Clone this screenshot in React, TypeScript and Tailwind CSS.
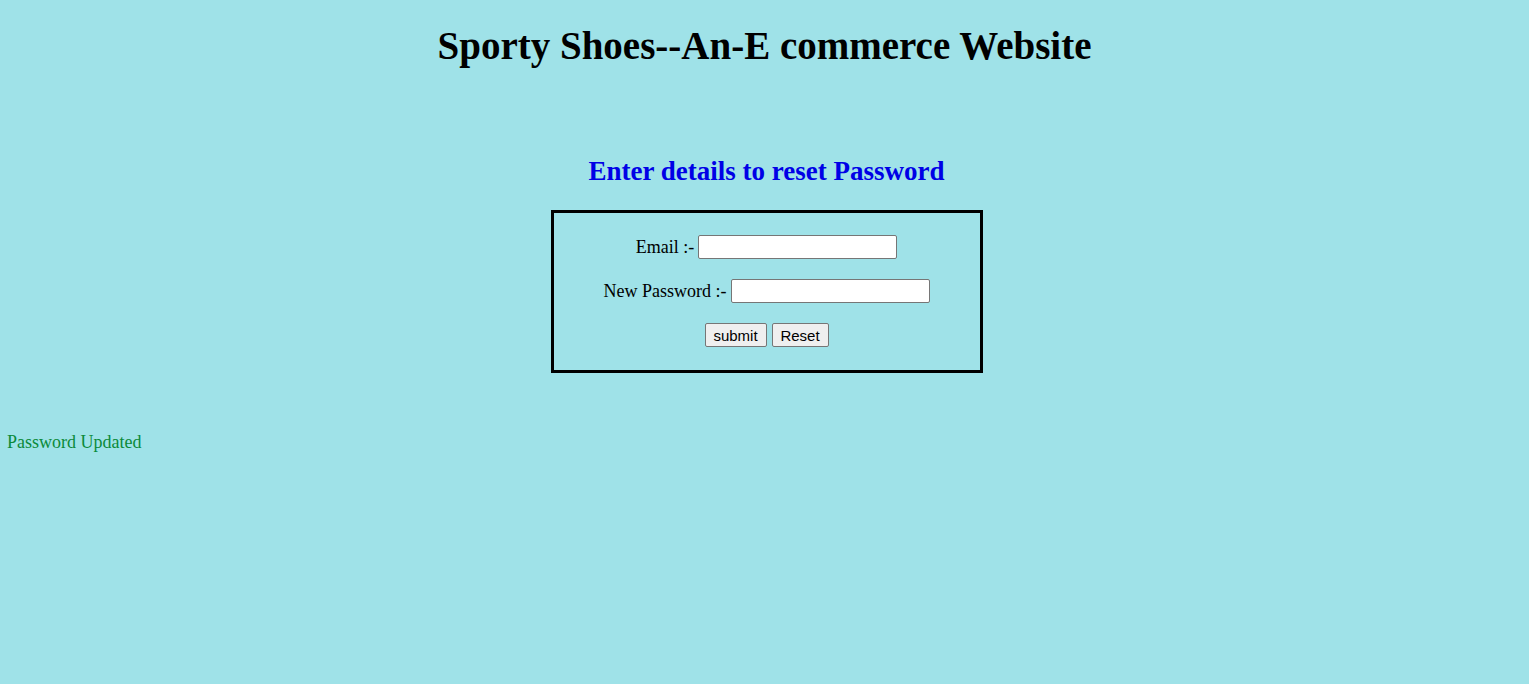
export default function App() {
  return (
    <div
      className="min-h-[684px] w-full bg-[#9fe2e8] text-black"
      style={{ fontFamily: '"Liberation Serif", "Times New Roman", serif' }}
    >
      {/* Header */}
      <h1 className="pt-[22px] text-center text-[39px] font-bold leading-[48px]">
        Sporty Shoes--An-E commerce Website
      </h1>

      {/* Reset form */}
      <h2 className="mt-[84px] pl-[4px] text-center text-[27px] font-bold leading-[34px] text-[#0000e6]">
        Enter details to reset Password
      </h2>

      <div className="mt-[22px] flex justify-center pl-[4px]">
        <form className="flex w-[432px] h-[163px] flex-col items-center border-[3px] border-black pt-[22px] text-[18px]">
          <div className="flex h-[24px] items-center gap-[4px]">
            <label>Email :-</label>
            <input
              type="text"
              className="h-[24px] w-[199px] rounded-[2px] border border-[#767676] bg-white px-1"
            />
          </div>
          <div className="mt-[20px] flex h-[24px] items-center gap-[4px]">
            <label>New Password :-</label>
            <input
              type="password"
              className="h-[24px] w-[199px] rounded-[2px] border border-[#767676] bg-white px-1"
            />
          </div>
          <div
            className="mt-[20px] flex gap-[5px] text-[15px]"
            style={{ fontFamily: '"Liberation Sans", Arial, sans-serif' }}
          >
            <button
              type="button"
              className="h-[24px] w-[62px] rounded-[2px] border border-[#767676] bg-[#efefef] leading-none"
            >
              submit
            </button>
            <button
              type="reset"
              className="h-[24px] w-[57px] rounded-[2px] border border-[#767676] bg-[#efefef] leading-none"
            >
              Reset
            </button>
          </div>
        </form>
      </div>

      <p className="mt-[59px] pl-[7px] text-[18px] leading-[20px] text-[#0b8a3a]">
        Password Updated
      </p>
    </div>
  );
}
